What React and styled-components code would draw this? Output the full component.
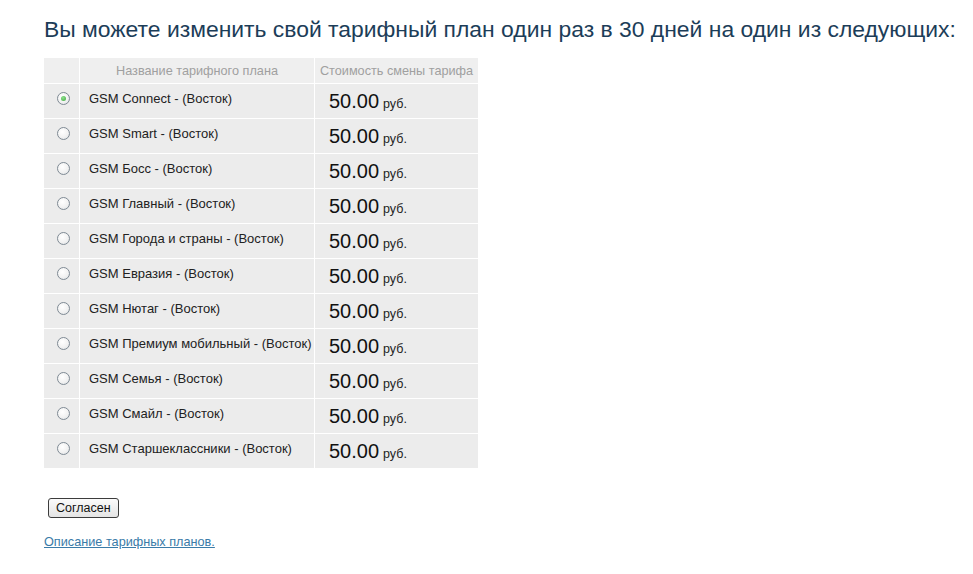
import React, { useState } from 'react';
import styled, { createGlobalStyle } from 'styled-components';

const GlobalStyle = createGlobalStyle`
  html, body {
    margin: 0;
    padding: 0;
    background: #ffffff;
  }
  body {
    font-family: Arial, "Liberation Sans", sans-serif;
  }
`;

const Page = styled.div`
  width: 973px;
  height: 574px;
  padding: 16px 0 0 43px;
  box-sizing: border-box;
`;

const Title = styled.h1`
  margin: 0 0 15px 1px;
  font-size: 22.9px;
  font-weight: normal;
  line-height: 26px;
  color: #1c3d58;
  white-space: nowrap;
`;

const PlanTable = styled.table`
  border-collapse: separate;
  border-spacing: 1px;
  font-size: 12px;
`;

const HeadCell = styled.th`
  height: 25px;
  padding: 0;
  background: #efefef;
  color: #a0a0a0;
  font-weight: normal;
  font-size: 12.7px;
  text-align: center;
  vertical-align: middle;
  white-space: nowrap;
`;

const Cell = styled.td`
  height: 34px;
  padding: 0;
  background: #ececec;
  vertical-align: top;
  box-sizing: border-box;
`;

const RadioMark = styled.span`
  display: block;
  width: 11px;
  height: 11px;
  margin: 8px 0 0 13px;
  border: 1px solid #7f8a94;
  border-radius: 50%;
  background: radial-gradient(circle at 40% 35%, #ffffff 0%, #f2f2f2 55%, #d8dde2 100%);
  position: relative;
  cursor: pointer;

  &::after {
    content: '';
    display: ${({ $checked }) => ($checked ? 'block' : 'none')};
    position: absolute;
    left: 3px;
    top: 3px;
    width: 5px;
    height: 5px;
    border-radius: 50%;
    background: radial-gradient(circle at 40% 35%, #8fe08f 0%, #3da83d 100%);
  }
`;

const PlanName = styled.div`
  padding: 7px 0 0 9px;
  color: #222;
  font-size: 13px;
  line-height: 15px;
  white-space: nowrap;
`;

const Price = styled.div`
  padding: 4px 0 0 14px;
  white-space: nowrap;
  color: #111;
`;

const Amount = styled.span`
  font-size: 20px;
  line-height: 26px;
`;

const Currency = styled.span`
  font-size: 12.5px;
  margin-left: 4px;
  color: #222;
`;

const Button = styled.button`
  margin: 29px 0 0 5px;
  height: 20px;
  padding: 0 7px;
  font-family: Arial, "Liberation Sans", sans-serif;
  font-size: 12.5px;
  color: #111;
  border: 1px solid #3c3c3c;
  border-radius: 3px;
  background: linear-gradient(#fbfbfb, #e4e4e4);
  cursor: pointer;
`;

const Footer = styled.div`
  margin-top: 14px;
  margin-left: 1px;
`;

const Link = styled.a`
  font-size: 12.7px;
  color: #3a7ba8;
  text-decoration: underline;
`;

const plans = [
  'GSM Connect - (Восток)',
  'GSM Smart - (Восток)',
  'GSM Босс - (Восток)',
  'GSM Главный - (Восток)',
  'GSM Города и страны - (Восток)',
  'GSM Евразия - (Восток)',
  'GSM Нютаг - (Восток)',
  'GSM Премиум мобильный - (Восток)',
  'GSM Семья - (Восток)',
  'GSM Смайл - (Восток)',
  'GSM Старшеклассники - (Восток)',
];

export default function App() {
  const [selected, setSelected] = useState(0);

  return (
    <Page>
      <GlobalStyle />
      <Title>Вы можете изменить свой тарифный план один раз в 30 дней на один из следующих:</Title>
      <PlanTable>
        <thead>
          <tr>
            <HeadCell style={{ width: 35 }} />
            <HeadCell style={{ width: 234 }}>Название тарифного плана</HeadCell>
            <HeadCell style={{ width: 163 }}>Стоимость смены тарифа</HeadCell>
          </tr>
        </thead>
        <tbody>
          {plans.map((name, i) => (
            <tr key={i}>
              <Cell>
                <RadioMark $checked={selected === i} onClick={() => setSelected(i)} />
              </Cell>
              <Cell>
                <PlanName>{name}</PlanName>
              </Cell>
              <Cell>
                <Price>
                  <Amount>50.00</Amount>
                  <Currency>руб.</Currency>
                </Price>
              </Cell>
            </tr>
          ))}
        </tbody>
      </PlanTable>
      <Button type="button">Согласен</Button>
      <Footer>
        <Link href="#">Описание тарифных планов.</Link>
      </Footer>
    </Page>
  );
}
